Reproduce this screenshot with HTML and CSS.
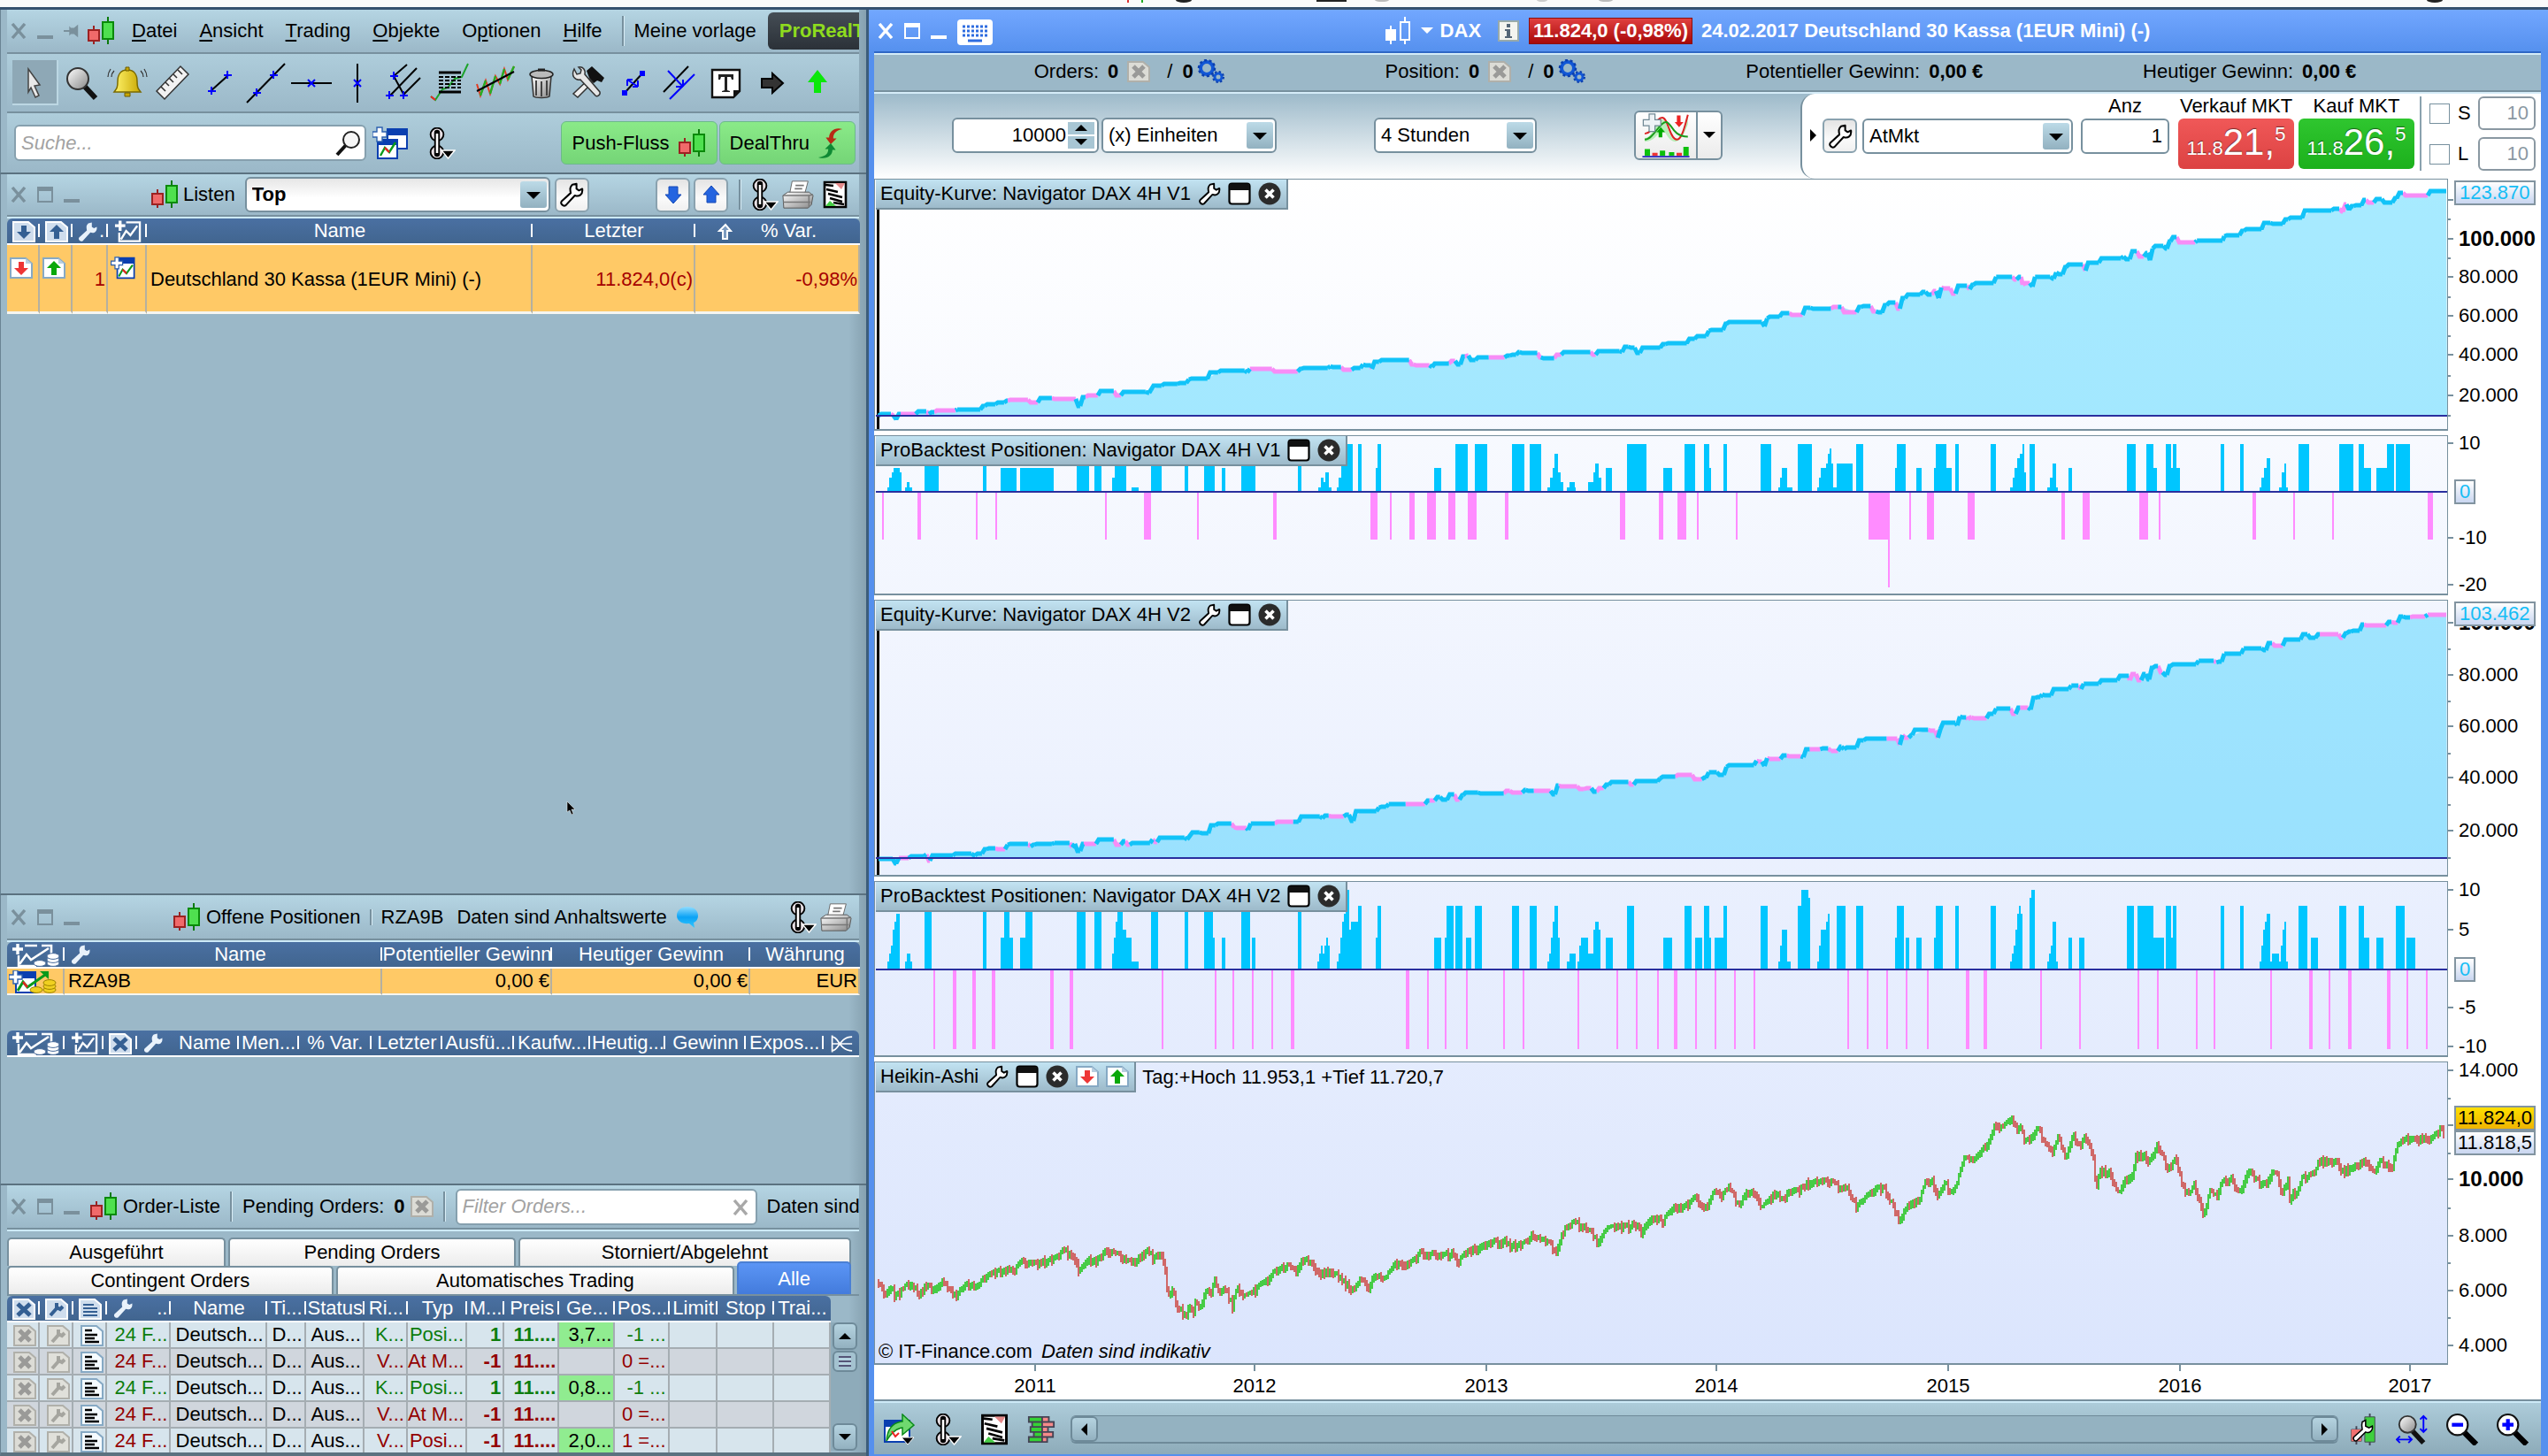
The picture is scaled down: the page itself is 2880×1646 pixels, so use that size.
FILE: index.html
```html
<!DOCTYPE html>
<html lang="de">
<head>
    <meta charset="UTF-8">
    <meta name="viewport" content="width=device-width, initial-scale=1.0">
    <title>ProRealTime - DAX</title>
    <link rel="stylesheet" href="styles.css">
</head>
<body>
    <!-- Icons -->
    <svg class="sprite" aria-hidden="true">
        <defs>
            <linearGradient id="steel" x1="0" y1="0" x2="1" y2="1"><stop offset="0" stop-color="#fff"/><stop offset="1" stop-color="#888"/></linearGradient>
            <linearGradient id="gold" x1="0" y1="0" x2="1" y2="0"><stop offset="0" stop-color="#fff36b"/><stop offset="1" stop-color="#c9a800"/></linearGradient>
            <linearGradient id="page" x1="0" y1="0" x2="0" y2="1"><stop offset="0" stop-color="#0a3fb0"/><stop offset=".3" stop-color="#0a3fb0"/><stop offset=".3" stop-color="#fff"/></linearGradient>
            <linearGradient id="cyan" x1="0" y1="0" x2="0" y2="1"><stop offset="0" stop-color="#8fdcff"/><stop offset=".5" stop-color="#0aa2f5"/><stop offset="1" stop-color="#35c8ff"/></linearGradient>
        </defs>
        <symbol id="i-x" viewBox="0 0 18 18"><path d="M2 1l14 16M16 1L2 17" stroke="currentColor" stroke-width="3.4" fill="none"/></symbol>
        <symbol id="i-max" viewBox="0 0 18 18"><path d="M1 1h16v16H1z" stroke="currentColor" stroke-width="2" fill="none"/><path d="M1 0h16v5H1z" fill="currentColor"/></symbol>
        <symbol id="i-min" viewBox="0 0 18 18"><path d="M0 14h18v4H0z" fill="currentColor"/></symbol>
        <symbol id="i-pin" viewBox="0 0 20 18"><path d="M0 8h7V3l2 2h4l5-4v16l-5-4H9l-2 2v-5H0z" fill="currentColor"/></symbol>
        <symbol id="i-candle" viewBox="0 0 32 32"><path d="M8 10v21" stroke="#9c2222" stroke-width="2"/><path d="M24 0v31" stroke="#0a7a0a" stroke-width="2"/><path d="M2 15h12v12H2z" fill="#f06a6a" stroke="#9c2222" stroke-width="2"/><path d="M18 6h12v19H18z" fill="#4fe04f" stroke="#0a8a0a" stroke-width="2"/></symbol>
        <symbol id="i-candle-w" viewBox="0 0 32 32"><path d="M8 10v21M24 0v6M24 26v5" stroke="#fff" stroke-width="2"/><path d="M2 14h12v13H2z" fill="#fff"/><path d="M19 6h10v20H19z" fill="none" stroke="#fff" stroke-width="2"/></symbol>
        <symbol id="i-cursor" viewBox="0 0 46 46"><path d="M16 8l13 18-6 1 5 11-4 2-5-11-3 5z" fill="#e8e8e8" stroke="#444" stroke-width="1.5"/></symbol>
        <symbol id="i-lens" viewBox="0 0 46 46"><path d="M26 26l13 14" stroke="#111" stroke-width="6"/><circle cx="19" cy="18" r="12" fill="url(#steel)" stroke="#333" stroke-width="2"/></symbol>
        <symbol id="i-bell" viewBox="0 0 46 46"><path d="M23 8c8 0 11 6 11 13 0 7 1 8 4 12H8c3-4 4-5 4-12 0-7 3-13 11-13z" fill="url(#gold)" stroke="#7a6a00" stroke-width="1.5"/><path d="M20 34h6v4h-6zM21 5h4v4h-4z" fill="#c9a800" stroke="#6a5a00"/><path d="M8 9c-2 2-3 4-3 7M4 7c-2 3-3 5-3 9M38 9c2 2 3 4 3 7M42 7c2 3 3 5 3 9" fill="none" stroke="#333" stroke-width="1.2"/></symbol>
        <symbol id="i-ruler" viewBox="0 0 46 46"><path d="M4 32L31 4l9 9-27 28z" fill="#f2f2f2" stroke="#333" stroke-width="1.5"/><path d="M9 27l5 5M14 22l4 4M18 17l5 5M23 13l4 4M28 8l5 5" stroke="#333" stroke-width="1.6"/></symbol>
        <symbol id="i-segment" viewBox="0 0 46 46"><path d="M13 32L33 14" stroke="#000" stroke-width="2"/><path d="M10 32h9M14 27v9M28 14h9M32 9v9" stroke="#00f" stroke-width="2"/></symbol>
        <symbol id="i-line" viewBox="0 0 46 46"><path d="M2 45L45 1" stroke="#000" stroke-width="2"/><path d="M9 34h9M13 29v9M28 14h9M32 9v9" stroke="#00f" stroke-width="2"/></symbol>
        <symbol id="i-hline" viewBox="0 0 46 46"><path d="M0 23h46" stroke="#000" stroke-width="2"/><path d="M19 19l8 8M27 19l-8 8" stroke="#00f" stroke-width="2"/></symbol>
        <symbol id="i-vline" viewBox="0 0 46 46"><path d="M23 1v44" stroke="#000" stroke-width="2"/><path d="M19 19l8 8M27 19l-8 8" stroke="#00f" stroke-width="2"/></symbol>
        <symbol id="i-fork" viewBox="0 0 46 46"><path d="M12 15L27 2M8 37L38 6M22 37l20-20M12 15l12 22" stroke="#000" stroke-width="2"/><path d="M8 15h9M12 10v9M3 37h9M7 32v9M19 37h9M23 32v9" stroke="#00f" stroke-width="2"/></symbol>
        <symbol id="i-fibo" viewBox="0 0 46 46"><path d="M2 38l5 4 8-12 6-2 8-10 8-2L44 1" fill="none" stroke="#1ca32b" stroke-width="2"/><path d="M2 38l5 4" stroke="#e22" stroke-width="2"/><path d="M11 11h25M11 33h25" stroke="#000" stroke-width="3"/><path d="M11 16h25M11 20h25M11 24h25M11 28h25" stroke="#000" stroke-width="2" stroke-dasharray="5 2"/></symbol>
        <symbol id="i-zigzag" viewBox="0 0 46 46"><path d="M2 24l4 13 6-17 5 15 6-20 5 9 5-17 4 12 7-15" fill="none" stroke="#e23b22" stroke-width="2"/><path d="M6 37l6-17M17 35l6-20M28 24l5-17M37 19l7-15" stroke="#23b023" stroke-width="2.4"/><path d="M2 32L44 10" stroke="#000" stroke-width="2"/></symbol>
        <symbol id="i-bin" viewBox="0 0 46 46"><path d="M12 15h22l-2 23c-3 2-15 2-18 0z" fill="url(#steel)" stroke="#333" stroke-width="1.5"/><ellipse cx="23" cy="13" rx="13" ry="4.5" fill="#bbb" stroke="#222" stroke-width="1.5"/><path d="M19 8h8" stroke="#222" stroke-width="3"/><path d="M17 20v17M23 21v17M29 20v17" stroke="#444" stroke-width="2"/></symbol>
        <symbol id="i-tools" viewBox="0 0 46 46"><path d="M22 9l6-5 14 13-3 5-5-2-4 3-5-6z" fill="#111"/><path d="M25 18l4 4-17 17-5-4z" fill="#eee" stroke="#333" stroke-width="1.5"/><path d="M8 7l3 6 4-1 1-4-3-3c5-1 8 3 7 8l17 20c1 3-3 6-5 4L15 19C9 20 4 15 8 7z" fill="#e6e6e6" stroke="#333" stroke-width="1.5"/></symbol>
        <symbol id="i-copyline" viewBox="0 0 46 46"><path d="M13 34L33 12" stroke="#000" stroke-width="2"/><path d="M10 31h6v6h-6zM30 9h6v6h-6z" fill="#00f"/><path d="M16 19l12 8M16 19v7M16 19h6M28 27v-7M28 27h-6" stroke="#00f" stroke-width="2" fill="none"/></symbol>
        <symbol id="i-channel" viewBox="0 0 46 46"><path d="M5 33L33 4" stroke="#000" stroke-width="2"/><path d="M12 41L40 13" stroke="#00f" stroke-width="2"/><path d="M10 9l17 18M27 27v-8M27 27h-8" stroke="#00f" stroke-width="2" fill="none"/></symbol>
        <symbol id="i-text" viewBox="0 0 46 46"><path d="M8 8h31v24l-7 7H8z" fill="#fff" stroke="#111" stroke-width="2.4"/><path d="M39 31h-7v8z" fill="#111"/><path d="M15 13h17v6h-2l-1-3h-4v15l3 1v1h-9v-1l3-1V16h-4l-1 3h-2z" fill="#222"/></symbol>
        <symbol id="i-right" viewBox="0 0 46 46"><path d="M12 18h12v-6l12 11-12 11v-6H12z" fill="#333" stroke="#000" stroke-width="2"/></symbol>
        <symbol id="i-up" viewBox="0 0 46 46"><path d="M23 8l11 14h-7v12h-8V22h-7z" fill="#0be80b"/></symbol>
        <symbol id="i-search" viewBox="0 0 30 30"><path d="M12 17L2 28" stroke="#111" stroke-width="4"/><circle cx="18" cy="11" r="9" fill="#f6f6f6" stroke="#222" stroke-width="2"/></symbol>
        <symbol id="i-charts" viewBox="0 0 40 36"><path d="M17 2h22v22H17z" fill="url(#page)" stroke="#0a3fb0" stroke-width="2"/><path d="M6 14h22v21H6z" fill="url(#page)" stroke="#0a3fb0" stroke-width="2"/><path d="M9 32l5-9 5 5 7-11" fill="none" stroke="#0a9a1a" stroke-width="2.4"/><path d="M14 23l5 5" stroke="#e22" stroke-width="2.4"/><path d="M5 0h6v5h5v6h-5v5H5v-5H0V5h5z" fill="#fff" stroke="#2b5fae" stroke-width="1.4"/></symbol>
        <symbol id="i-chart" viewBox="0 0 32 30"><path d="M8 2h22v26H8z" fill="url(#page)" stroke="#0a3fb0" stroke-width="2"/><path d="M10 26l5-9 5 5 8-11" fill="none" stroke="#0a9a1a" stroke-width="2.4"/><path d="M15 17l5 5" stroke="#e22" stroke-width="2.4"/><path d="M5 1h5v5h5v5h-5v5H5v-5H0V6h5z" fill="#fff" stroke="#2b5fae" stroke-width="1.4"/></symbol>
        <symbol id="i-chart-w" viewBox="0 0 32 26"><path d="M14 2h16v22H6V14" fill="none" stroke="#fff" stroke-width="2.4"/><path d="M8 22l6-10 5 5 8-11" fill="none" stroke="#fff" stroke-width="2.4"/><path d="M7 0v12M1 6h12" stroke="#fff" stroke-width="3.4"/></symbol>
        <symbol id="i-chain" viewBox="0 0 32 36"><g fill="none" stroke="#000" stroke-width="7.4"><circle cx="11" cy="8" r="4.6"/><circle cx="11" cy="28" r="4.6"/></g><g fill="none" stroke="#e8e0e4" stroke-width="3.6"><circle cx="11" cy="8" r="4.6"/><circle cx="11" cy="28" r="4.6"/></g><path d="M11 6v24" stroke="#000" stroke-width="6.4" stroke-linecap="round"/><path d="M11 7v22" stroke="#fff" stroke-width="2.6"/><path d="M16 26h15l-7.500 9z" fill="#000" stroke="#fff" stroke-width="1.4"/></symbol>
        <symbol id="i-swap" viewBox="0 0 32 38"><path d="M30 2c-9-3-16 3-16 10h-4l6 8 7-7h-4c0-6 4-10 11-11z" fill="#b82a14"/><path d="M1 36c10 3 17-2 17-9h4l-6-8-7 7h4c0 6-4 9-12 10z" fill="#0f8a34"/></symbol>
        <symbol id="i-wrench" viewBox="0 0 30 30"><path d="M16 3l5-1v6l3 2 4-2c1 7-4 10-9 8L8 28c-3 2-7-2-5-5l11-10c-1-5-1-7 2-10z" fill="#fff" stroke="#000" stroke-width="2.2" stroke-linejoin="round"/></symbol>
        <symbol id="i-wrench-w" viewBox="0 0 30 30"><path d="M16 3l5-1v6l3 2 4-2c1 7-4 10-9 8L8 28c-3 2-7-2-5-5l11-10c-1-5-1-7 2-10z" fill="#e9f2fb"/></symbol>
        <symbol id="i-dn" viewBox="0 0 28 28"><path d="M9 5h10v9h4l-9 10-9-10h4z" fill="#2464e0" stroke="#1449b5"/></symbol>
        <symbol id="i-upb" viewBox="0 0 28 28"><path d="M9 23h10v-9h4L14 4 5 14h4z" fill="#2464e0" stroke="#1449b5"/></symbol>
        <symbol id="i-upo" viewBox="0 0 20 24"><path d="M7 20h5v-9h4l-6-7-7 7h4z" fill="#7d9cc0" stroke="#fff" stroke-width="2"/></symbol>
        <symbol id="i-print" viewBox="0 0 38 34"><path d="M12 1h19l-4 15H9z" fill="#fff" stroke="#666"/><path d="M16 6h10M15 10h9" stroke="#777" stroke-width="1.800"/><path d="M1 18l6-4h25l5 4-2 11-4 4H2z" fill="url(#steel)" stroke="#555"/><path d="M1 18h31l5-1M1 26h33M32 18v14" stroke="#777" stroke-width="1.5" fill="none"/></symbol>
        <symbol id="i-journal" viewBox="0 0 28 32"><path d="M2 2h24v28H2z" fill="#fff" stroke="#000" stroke-width="2.6"/><path d="M3 5l9 1M4 10l13 3M6 15l16 4M8 20l14 4M12 25l12 2" stroke="#000" stroke-width="2.400"/><path d="M14 3h11l-4 7z" fill="#e48a8a"/><path d="M3 29l5-6 7 6z" fill="#45cc45"/></symbol>
        <symbol id="i-page-dn" viewBox="0 0 26 24"><path d="M1 1h17l7 6v16H1z" fill="#fff" stroke="#86a9c4" stroke-width="2"/><path d="M18 1v6h7z" fill="#b9cfe0"/><path d="M10 5h6v7h5l-8 8-8-8h5z" fill="#ee3535"/></symbol>
        <symbol id="i-page-up" viewBox="0 0 26 24"><path d="M1 1h17l7 6v16H1z" fill="#fff" stroke="#86a9c4" stroke-width="2"/><path d="M18 1v6h7z" fill="#b9cfe0"/><path d="M10 20h6v-8h5l-8-8-8 8h5z" fill="#09a809"/></symbol>
        <symbol id="i-hpage-dn" viewBox="0 0 26 24"><path d="M1 1h17l7 6v16H1z" fill="#cfdded" stroke="#fff" stroke-width="2"/><path d="M10 5h6v7h5l-8 8-8-8h5z" fill="#345f93"/></symbol>
        <symbol id="i-hpage-up" viewBox="0 0 26 24"><path d="M1 1h17l7 6v16H1z" fill="#cfdded" stroke="#fff" stroke-width="2"/><path d="M10 20h6v-8h5l-8-8-8 8h5z" fill="#345f93"/></symbol>
        <symbol id="i-hpage-x" viewBox="0 0 26 24"><path d="M1 1h17l7 6v16H1z" fill="#cfdded" stroke="#fff" stroke-width="2"/><path d="M6 6l14 13M20 6L6 19" stroke="#345f93" stroke-width="5"/></symbol>
        <symbol id="i-hpage-w" viewBox="0 0 26 24"><path d="M1 1h17l7 6v16H1z" fill="#cfdded" stroke="#fff" stroke-width="2"/><path d="M6 19l8-9M13 5v5l4 2 3-3" stroke="#345f93" stroke-width="4" fill="none"/></symbol>
        <symbol id="i-hpage-l" viewBox="0 0 26 24"><path d="M1 1h17l7 6v16H1z" fill="#cfdded" stroke="#fff" stroke-width="2"/><path d="M5 7h12M5 11h16M5 15h16M5 19h16" stroke="#345f93" stroke-width="2"/></symbol>
        <symbol id="i-gpage-x" viewBox="0 0 26 24"><path d="M1 1h17l7 6v16H1z" fill="#dcdcd6" stroke="#b0b0aa" stroke-width="2"/><path d="M7 6l12 12M19 6L7 18" stroke="#9a9a98" stroke-width="5"/></symbol>
        <symbol id="i-gpage-w" viewBox="0 0 26 24"><path d="M1 1h17l7 6v16H1z" fill="#e0e0da" stroke="#b0b0aa" stroke-width="2"/><path d="M6 19l8-9M13 5v5l4 2 3-3" stroke="#a5a59f" stroke-width="4" fill="none"/></symbol>
        <symbol id="i-page-l" viewBox="0 0 26 24"><path d="M1 1h17l7 6v16H1z" fill="#f5fbff" stroke="#86a9c4" stroke-width="2"/><path d="M5 6h8M5 11h14M5 15h11M5 19h16" stroke="#000" stroke-width="2.4"/></symbol>
        <symbol id="i-coins" viewBox="0 0 54 26"><path d="M8 2h22v23H8z" fill="url(#page)" stroke="#0a3fb0" stroke-width="2"/><path d="M10 23l6-10 5 6 20-14" fill="none" stroke="#0a9a1a" stroke-width="3"/><path d="M35 1h10v9z" fill="#0a9a1a"/><path d="M16 13l5 6" stroke="#e22" stroke-width="2.4"/><path d="M5 0h5v5h5v5h-5v5H5v-5H0V5h5z" fill="#fff" stroke="#2b5fae" stroke-width="1.4"/><g fill="#f0d020" stroke="#9c8200"><ellipse cx="31" cy="22" rx="7" ry="3.4"/><ellipse cx="46" cy="22" rx="7" ry="3.4"/><ellipse cx="46" cy="18" rx="7" ry="3.4"/><ellipse cx="46" cy="14" rx="7" ry="3.4"/></g></symbol>
        <symbol id="i-coins-w" viewBox="0 0 54 26"><path d="M14 2h14M7 13v12h20" fill="none" stroke="#fff" stroke-width="2.4"/><path d="M8 23l8-11 5 6 20-13M33 2h11v9" fill="none" stroke="#fff" stroke-width="2.6"/><path d="M6 0v12M0 6h12" stroke="#fff" stroke-width="3.4"/><g fill="#fff" stroke="#46699a"><ellipse cx="31" cy="22" rx="7" ry="3.4"/><ellipse cx="46" cy="22" rx="7" ry="3.4"/><ellipse cx="46" cy="18" rx="7" ry="3.4"/><ellipse cx="46" cy="14" rx="7" ry="3.4"/></g></symbol>
        <symbol id="i-merge" viewBox="0 0 30 22"><path d="M3 0v22M3 2c9 0 9 18 26 18M3 20C12 20 12 2 29 2M3 11h26" fill="none" stroke="#fff" stroke-width="2"/></symbol>
        <symbol id="i-bubble" viewBox="0 0 26 26"><path d="M13 1c7 0 12 4 12 10 0 4-2 7-5 8l1 6-6-5C7 21 1 17 1 11 1 5 6 1 13 1z" fill="url(#cyan)"/></symbol>
        <symbol id="i-gears" viewBox="0 0 32 28"><circle cx="11" cy="10" r="7" fill="none" stroke="#1257d6" stroke-width="4"/><circle cx="11" cy="10" r="9" fill="none" stroke="#0b3fae" stroke-width="2.5" stroke-dasharray="3 2.6"/><circle cx="24" cy="20" r="4" fill="none" stroke="#1257d6" stroke-width="3"/><circle cx="24" cy="20" r="6" fill="none" stroke="#0b3fae" stroke-width="2" stroke-dasharray="2.4 2.3"/></symbol>
        <symbol id="i-keys" viewBox="0 0 40 30"><rect width="40" height="29" rx="4" fill="#fff"/><path d="M6 8h28M6 13h28M6 18h28" stroke="#2e6ce0" stroke-width="3" stroke-dasharray="3 2"/><path d="M12 24h16" stroke="#2e6ce0" stroke-width="3"/></symbol>
        <symbol id="i-info" viewBox="0 0 24 24"><path d="M1 1h22v22H1z" fill="#f4f4f0" stroke="#9aa" stroke-width="2"/><path d="M10 4h4v4h-4zM8 10h6v8h2v2H8v-2h2v-6H8z" fill="#567"/></symbol>
        <symbol id="i-indicator" viewBox="0 0 62 46"><path d="M2 34C14 34 16 8 24 8c10 0 10 28 20 28 9 0 12-20 17-33v12c-4 10-8 22-17 24-8 0-12-10-18-18-6 8-12 18-24 18z" fill="#b9eeb9"/><path d="M2 28c12 0 14-22 24-22 8 0 10 30 20 30 6 0 10-14 15-34" fill="none" stroke="#d22" stroke-width="2.4"/><path d="M2 36c12 0 20-24 29-24 8 0 8 20 30 20" fill="none" stroke="#1a9c1a" stroke-width="2.4"/><path d="M8 1h8v8h8v8h-8v8H8v-8H0V9h8z" fill="#eef3f6" stroke="#708894" stroke-width="1.5"/><path d="M46 3h5v9h4l-6 7-6-7h3z" fill="#e22"/><path d="M21 33h5v-7h4l-6-7-6 7h3z" fill="#0a0"/></symbol>
        <symbol id="i-hist" viewBox="0 0 62 14"><path d="M3 3h7v9H3zM23 5h7v7h-7zM35 7h7v5h-7zM54 0h7v12h-7z" fill="#0cc00c"/><path d="M13 8h7v4h-7zM45 8h7v4h-7z" fill="#e33"/><path d="M0 13h62" stroke="#22b" stroke-width="2"/></symbol>
        <symbol id="i-win" viewBox="0 0 26 26"><rect x="1.5" y="1.5" width="23" height="23" rx="3" fill="#fff" stroke="#000" stroke-width="2.2"/><path d="M2 2h22v7H2z" fill="#111"/></symbol>
        <symbol id="i-xc" viewBox="0 0 26 26"><circle cx="13" cy="13" r="12.5" fill="#2b2b2b"/><path d="M8.500 8.500l9 9M17.500 8.500l-9 9" stroke="#fff" stroke-width="3.600"/></symbol>
        <symbol id="i-share" viewBox="0 0 36 36"><path d="M2 8h28v24H2z" fill="url(#page)" stroke="#0a3fb0" stroke-width="2"/><path d="M4 31C5 17 12 10 22 9V1l13 12-13 11v-8c-8 1-13 6-18 15z" fill="#6fd86f" stroke="#0a8a1a" stroke-width="1.5"/><path d="M10 20l4 6 4-4" stroke="#e22" stroke-width="2" fill="none"/><path d="M21 27h14l-7 8z" fill="#000" stroke="#fff"/></symbol>
        <symbol id="i-depth" viewBox="0 0 34 32"><g stroke="#445" stroke-width="2"><path d="M2 1h16v6H2zM6 7h12v6H6zM4 13h14v6H4zM8 19h10v6H8zM2 25h16v6H2z" fill="#34d334"/><path d="M18 1h8v6h-8zM18 7h14v6H18zM18 13h7v6h-7zM18 19h13v6H18zM18 25h6v6h-6z" fill="#f58a8a"/></g></symbol>
        <symbol id="i-wcandle" viewBox="0 0 32 38"><path d="M8 15v22M24 0v38" stroke="#445" stroke-width="2"/><path d="M2 19h12v14H2zM18 4h12v30H18z" fill="#3ecf3e" stroke="#445"/><path d="M2 19h12v14H2z" fill="#f07070"/><path d="M15 10l4-2v7l4 2 4-2c1 6-4 9-8 7L9 32c-2 2-6-1-4-4l10-9c-1-4-1-6 0-9z" fill="#fff" stroke="#000" stroke-width="1.6"/></symbol>
        <symbol id="i-fit" viewBox="0 0 38 34"><path d="M20 19l13 14" stroke="#111" stroke-width="6"/><circle cx="14" cy="11" r="10" fill="url(#steel)" stroke="#333" stroke-width="2"/><path d="M33 1v18M29 5l4-4 4 4M29 16l4 4 4-4M1 29h18M5 25l-4 4 4 4M15 25l4 4-4 4" stroke="#00f" stroke-width="2" fill="none"/></symbol>
        <symbol id="i-zout" viewBox="0 0 34 34"><path d="M18 19l14 14" stroke="#000" stroke-width="6"/><circle cx="12" cy="12" r="11" fill="#fff" stroke="#111" stroke-width="2"/><path d="M6 12h12" stroke="#00f" stroke-width="4"/></symbol>
        <symbol id="i-zin" viewBox="0 0 34 34"><path d="M18 19l14 14" stroke="#000" stroke-width="6"/><circle cx="12" cy="12" r="11" fill="#fff" stroke="#111" stroke-width="2"/><path d="M6 12h12M12 6v12" stroke="#00f" stroke-width="4"/></symbol>
    </svg>

    <div class="strip">
        <svg class="strip-marks" viewBox="0 0 2880 8" preserveAspectRatio="none" aria-hidden="true">
            <path d="M1274 0h2v3h-2z" fill="#d33"/><path d="M1290 0h2v3h-2z" fill="#2a2"/><ellipse cx="1338" cy="0" rx="9" ry="3" fill="#222"/><path d="M1488 0h34v2h-34z" fill="#222"/><ellipse cx="1562" cy="0" rx="8" ry="2" fill="#bbb"/><ellipse cx="1743" cy="0" rx="6" ry="2" fill="#ccc"/><ellipse cx="1815" cy="0" rx="8" ry="2" fill="#bbb"/><ellipse cx="2752" cy="0" rx="9" ry="3" fill="#222"/>
        </svg>
    </div>

    <div class="desk">
        <div class="left">
            <!-- Hauptfenster -->
            <section class="win">
                <div class="bar menubar">
                    <div class="ctl">
                        <button aria-label="Schließen"><svg><use href="#i-x"/></svg></button>
                        <button aria-label="Minimieren"><svg><use href="#i-min"/></svg></button>
                        <button aria-label="Anheften"><svg><use href="#i-pin"/></svg></button>
                    </div>
                    <svg class="candle"><use href="#i-candle"/></svg>
                    <nav class="menu">
                        <a href="#"><u>D</u>atei</a>
                        <a href="#"><u>A</u>nsicht</a>
                        <a href="#"><u>T</u>rading</a>
                        <a href="#"><u>O</u>bjekte</a>
                        <a href="#">O<u>p</u>tionen</a>
                        <a href="#"><u>H</u>ilfe</a>
                    </nav>
                    <span class="sep"></span>
                    <a class="template" href="#">Meine vorlage</a>
                    <button class="brand">ProRealT</button>
                </div>
                <div class="bar tools">
                    <button class="active" aria-label="Zeiger"><svg><use href="#i-cursor"/></svg></button>
                    <button aria-label="Lupe"><svg><use href="#i-lens"/></svg></button>
                    <button aria-label="Alarm"><svg><use href="#i-bell"/></svg></button>
                    <button aria-label="Lineal"><svg><use href="#i-ruler"/></svg></button>
                    <button aria-label="Segment"><svg><use href="#i-segment"/></svg></button>
                    <button aria-label="Linie"><svg><use href="#i-line"/></svg></button>
                    <button aria-label="Horizontale"><svg><use href="#i-hline"/></svg></button>
                    <button aria-label="Vertikale"><svg><use href="#i-vline"/></svg></button>
                    <button aria-label="Pitchfork"><svg><use href="#i-fork"/></svg></button>
                    <button aria-label="Fibonacci"><svg><use href="#i-fibo"/></svg></button>
                    <button aria-label="Regression"><svg><use href="#i-zigzag"/></svg></button>
                    <button aria-label="Löschen"><svg><use href="#i-bin"/></svg></button>
                    <button aria-label="Werkzeuge"><svg><use href="#i-tools"/></svg></button>
                    <button aria-label="Kopieren"><svg><use href="#i-copyline"/></svg></button>
                    <button aria-label="Parallele"><svg><use href="#i-channel"/></svg></button>
                    <button aria-label="Text"><svg><use href="#i-text"/></svg></button>
                    <button aria-label="Pfeil rechts"><svg><use href="#i-right"/></svg></button>
                    <button aria-label="Pfeil hoch"><svg><use href="#i-up"/></svg></button>
                </div>
                <div class="searchbar">
                    <div class="search">
                        <input type="text" placeholder="Suche..." aria-label="Suche">
                        <svg><use href="#i-search"/></svg>
                    </div>
                    <button class="plain" aria-label="Neuer Chart"><svg class="w40"><use href="#i-charts"/></svg></button>
                    <button class="plain link" aria-label="Verknüpfen"><svg class="w32"><use href="#i-chain"/></svg></button>
                    <div class="flow">
                        <button>Push-Fluss <svg class="candle"><use href="#i-candle"/></svg></button>
                        <button>DealThru <svg class="swap"><use href="#i-swap"/></svg></button>
                    </div>
                </div>
            </section>

            <!-- Listen -->
            <section class="win lists">
                <div class="bar titlebar">
                    <div class="ctl">
                        <button aria-label="Schließen"><svg><use href="#i-x"/></svg></button>
                        <button aria-label="Maximieren"><svg><use href="#i-max"/></svg></button>
                        <button aria-label="Minimieren"><svg><use href="#i-min"/></svg></button>
                    </div>
                    <div class="lists-head">
                        <svg class="candle"><use href="#i-candle"/></svg>
                        <label for="list">Listen</label>
                        <div class="select list-select"><select id="list"><option>Top</option></select><span class="arrow"></span></div>
                        <button class="key" aria-label="Einstellungen"><svg><use href="#i-wrench"/></svg></button>
                    </div>
                    <div class="right-tools">
                        <button class="key" aria-label="Nach unten"><svg><use href="#i-dn"/></svg></button>
                        <button class="key" aria-label="Nach oben"><svg><use href="#i-upb"/></svg></button>
                        <span class="sep"></span>
                        <button class="plain" aria-label="Verknüpfen"><svg class="w32"><use href="#i-chain"/></svg></button>
                        <button class="plain" aria-label="Drucken"><svg class="w38"><use href="#i-print"/></svg></button>
                        <button class="plain" aria-label="Journal"><svg class="journal"><use href="#i-journal"/></svg></button>
                    </div>
                </div>
                <table class="grid list-table">
                    <colgroup><col class="c37"><col class="c37"><col class="c40"><col class="c44"><col class="c436"><col class="c184"><col class="c186"></colgroup>
                    <thead>
                        <tr>
                            <th><svg class="pg"><use href="#i-hpage-dn"/></svg></th>
                            <th><svg class="pg"><use href="#i-hpage-up"/></svg></th>
                            <th><svg class="pg"><use href="#i-wrench-w"/></svg>.</th>
                            <th><svg class="pg wide"><use href="#i-chart-w"/></svg></th>
                            <th>Name</th>
                            <th>Letzter</th>
                            <th class="var"><svg class="pg"><use href="#i-upo"/></svg><span>% Var.</span></th>
                        </tr>
                    </thead>
                    <tbody>
                        <tr>
                            <td class="ic"><svg class="pg"><use href="#i-page-dn"/></svg></td>
                            <td class="ic"><svg class="pg"><use href="#i-page-up"/></svg></td>
                            <td class="num neg">1</td>
                            <td class="ic"><svg class="pg wide"><use href="#i-chart"/></svg></td>
                            <td>Deutschland 30 Kassa (1EUR Mini) (-)</td>
                            <td class="num neg">11.824,0(c)</td>
                            <td class="num neg">-0,98%</td>
                        </tr>
                    </tbody>
                </table>
                <svg class="mouse" viewBox="0 0 12 16" aria-hidden="true"><path d="M1 1l9 9H6l2 5-2 1-2-5-3 2z" fill="#000" stroke="#fff" stroke-width=".5"/></svg>
            </section>

            <!-- Offene Positionen -->
            <section class="win positions">
                <div class="bar titlebar">
                    <div class="ctl">
                        <button aria-label="Schließen"><svg><use href="#i-x"/></svg></button>
                        <button aria-label="Maximieren"><svg><use href="#i-max"/></svg></button>
                        <button aria-label="Minimieren"><svg><use href="#i-min"/></svg></button>
                    </div>
                    <div class="pos-head">
                        <svg class="candle"><use href="#i-candle"/></svg>
                        <span>Offene Positionen</span>
                        <span class="sep short"></span>
                        <span>RZA9B</span>
                        <span class="hint">Daten sind Anhaltswerte</span>
                        <svg class="bubble"><use href="#i-bubble"/></svg>
                    </div>
                    <div class="right-tools">
                        <button class="plain" aria-label="Verknüpfen"><svg class="w32"><use href="#i-chain"/></svg></button>
                        <button class="plain" aria-label="Drucken"><svg class="w38"><use href="#i-print"/></svg></button>
                    </div>
                </div>
                <table class="grid pos-table">
                    <colgroup><col class="c65"><col class="c359"><col class="c192"><col class="c224"><col class="c124"></colgroup>
                    <thead>
                        <tr>
                            <th><svg class="coins"><use href="#i-coins-w"/></svg></th>
                            <th class="with-ic"><svg class="pg"><use href="#i-wrench-w"/></svg><span>Name</span></th>
                            <th>Potentieller Gewinn</th>
                            <th>Heutiger Gewinn</th>
                            <th>Währung</th>
                        </tr>
                    </thead>
                    <tbody>
                        <tr>
                            <td><svg class="coins"><use href="#i-coins"/></svg></td>
                            <td>RZA9B</td>
                            <td class="num">0,00 €</td>
                            <td class="num">0,00 €</td>
                            <td class="num">EUR</td>
                        </tr>
                    </tbody>
                </table>
                <table class="grid detail-table">
                    <colgroup><col class="c65"><col class="c44"><col class="c38"><col class="c114"><col class="c68"><col class="c82"><col class="c80"><col class="c81"><col class="c86"><col class="c85"><col class="c90"><col class="c88"><col class="c40"></colgroup>
                    <thead>
                        <tr>
                            <th><svg class="coins"><use href="#i-coins-w"/></svg></th>
                            <th><svg class="pg wide"><use href="#i-chart-w"/></svg></th>
                            <th><svg class="pg"><use href="#i-hpage-x"/></svg></th>
                            <th class="with-ic"><svg class="pg"><use href="#i-wrench-w"/></svg><span>Name</span></th>
                            <th>Men...</th>
                            <th>% Var.</th>
                            <th>Letzter</th>
                            <th>Ausfü...</th>
                            <th>Kaufw...</th>
                            <th>Heutig...</th>
                            <th>Gewinn</th>
                            <th>Expos...</th>
                            <th><svg class="pg"><use href="#i-merge"/></svg></th>
                        </tr>
                    </thead>
                </table>
            </section>

            <!-- Order-Liste -->
            <section class="win orders">
                <div class="bar titlebar">
                    <div class="ctl">
                        <button aria-label="Schließen"><svg><use href="#i-x"/></svg></button>
                        <button aria-label="Maximieren"><svg><use href="#i-max"/></svg></button>
                        <button aria-label="Minimieren"><svg><use href="#i-min"/></svg></button>
                    </div>
                    <div class="order-head">
                        <svg class="candle"><use href="#i-candle"/></svg>
                        <span>Order-Liste</span>
                        <span class="sep"></span>
                        <span>Pending Orders:</span>
                        <b>0</b>
                        <svg class="pg"><use href="#i-gpage-x"/></svg>
                        <span class="sep"></span>
                        <div class="search filter">
                            <input type="text" placeholder="Filter Orders..." aria-label="Filter Orders">
                            <svg><use href="#i-x"/></svg>
                        </div>
                        <span>Daten sind</span>
                    </div>
                </div>
                <div class="tabs upper">
                    <button>Ausgeführt</button>
                    <button>Pending Orders</button>
                    <button>Storniert/Abgelehnt</button>
                </div>
                <div class="tabs lower">
                    <button>Contingent Orders</button>
                    <button>Automatisches Trading</button>
                    <button class="on">Alle</button>
                </div>
                <div class="order-body">
                    <table class="grid order-table">
                        <colgroup><col class="c37"><col class="c38"><col class="c38"><col class="c72"><col class="c108"><col class="c44"><col class="c66"><col class="c49"><col class="c67"><col class="c42"><col class="c62"><col class="c63"><col class="c61"><col class="c54"><col class="c64"><col class="c64"></colgroup>
                        <thead>
                            <tr>
                                <th><svg class="pg"><use href="#i-hpage-x"/></svg></th>
                                <th><svg class="pg"><use href="#i-hpage-w"/></svg></th>
                                <th><svg class="pg"><use href="#i-hpage-l"/></svg></th>
                                <th class="with-ic"><svg class="pg"><use href="#i-wrench-w"/></svg><span class="end">..</span></th>
                                <th>Name</th><th>Ti...</th><th>Status</th><th>Ri...</th><th>Typ</th><th>M...</th><th>Preis</th><th>Ge...</th><th>Pos...</th><th>Limit</th><th>Stop</th><th>Trai...</th>
                            </tr>
                        </thead>
                        <tbody>
                            <tr class="buy"><td><svg class="pg"><use href="#i-gpage-x"/></svg></td><td><svg class="pg"><use href="#i-gpage-w"/></svg></td><td><svg class="pg"><use href="#i-page-l"/></svg></td><td class="c">24 F...</td><td>Deutsch...</td><td>D...</td><td>Aus...</td><td class="c">K...</td><td class="c">Posi...</td><td class="c b">1</td><td class="c b">11....</td><td class="win-cell">3,7...</td><td class="c">-1 ...</td><td></td><td></td><td></td></tr>
                            <tr class="sell"><td><svg class="pg"><use href="#i-gpage-x"/></svg></td><td><svg class="pg"><use href="#i-gpage-w"/></svg></td><td><svg class="pg"><use href="#i-page-l"/></svg></td><td class="c">24 F...</td><td>Deutsch...</td><td>D...</td><td>Aus...</td><td class="c">V...</td><td class="c">At M...</td><td class="c b">-1</td><td class="c b">11....</td><td></td><td class="c">0 =...</td><td></td><td></td><td></td></tr>
                            <tr class="buy"><td><svg class="pg"><use href="#i-gpage-x"/></svg></td><td><svg class="pg"><use href="#i-gpage-w"/></svg></td><td><svg class="pg"><use href="#i-page-l"/></svg></td><td class="c">24 F...</td><td>Deutsch...</td><td>D...</td><td>Aus...</td><td class="c">K...</td><td class="c">Posi...</td><td class="c b">1</td><td class="c b">11....</td><td class="win-cell">0,8...</td><td class="c">-1 ...</td><td></td><td></td><td></td></tr>
                            <tr class="sell"><td><svg class="pg"><use href="#i-gpage-x"/></svg></td><td><svg class="pg"><use href="#i-gpage-w"/></svg></td><td><svg class="pg"><use href="#i-page-l"/></svg></td><td class="c">24 F...</td><td>Deutsch...</td><td>D...</td><td>Aus...</td><td class="c">V...</td><td class="c">At M...</td><td class="c b">-1</td><td class="c b">11....</td><td></td><td class="c">0 =...</td><td></td><td></td><td></td></tr>
                            <tr class="sell"><td><svg class="pg"><use href="#i-gpage-x"/></svg></td><td><svg class="pg"><use href="#i-gpage-w"/></svg></td><td><svg class="pg"><use href="#i-page-l"/></svg></td><td class="c">24 F...</td><td>Deutsch...</td><td>D...</td><td>Aus...</td><td class="c">V...</td><td class="c">Posi...</td><td class="c b">-1</td><td class="c b">11....</td><td class="win-cell">2,0...</td><td class="c">1 =...</td><td></td><td></td><td></td></tr>
                        </tbody>
                    </table>
                    <div class="vscroll">
                        <button aria-label="Hoch"><span class="tri up"></span></button>
                        <span class="thumb"></span>
                        <button class="last" aria-label="Runter"><span class="tri down"></span></button>
                    </div>
                </div>
            </section>
        </div>

        <!-- Chartfenster -->
        <main class="chart-win">
            <div class="chart-title">
                <div class="ctl">
                    <button aria-label="Schließen"><svg><use href="#i-x"/></svg></button>
                    <button aria-label="Maximieren"><svg><use href="#i-max"/></svg></button>
                    <button aria-label="Minimieren"><svg><use href="#i-min"/></svg></button>
                    <button class="keys" aria-label="Tastatur"><svg><use href="#i-keys"/></svg></button>
                </div>
                <div class="instrument">
                    <svg class="candle"><use href="#i-candle-w"/></svg>
                    <span class="tri down white"></span>
                    <span class="symbol">DAX</span>
                    <svg class="pg"><use href="#i-info"/></svg>
                    <span class="price">11.824,0 (-0,98%)</span>
                    <span>24.02.2017 Deutschland 30 Kassa (1EUR Mini) (-)</span>
                </div>
            </div>

            <div class="info">
                <div class="info-cell">Orders: <b>0</b><svg class="pg"><use href="#i-gpage-x"/></svg><span class="slash">/</span><b>0</b><svg class="gears"><use href="#i-gears"/></svg></div>
                <div class="info-cell">Position: <b>0</b><svg class="pg"><use href="#i-gpage-x"/></svg><span class="slash">/</span><b>0</b><svg class="gears"><use href="#i-gears"/></svg></div>
                <div class="info-cell">Potentieller Gewinn: <b>0,00 €</b></div>
                <div class="info-cell">Heutiger Gewinn: <b>0,00 €</b></div>
            </div>

            <div class="controls">
                <div class="view">
                    <div class="range">
                        <div class="spin">
                            <input type="text" value="10000" aria-label="Anzahl Einheiten">
                            <span class="spin-btns"><button aria-label="Mehr"><span class="tri up"></span></button><button aria-label="Weniger"><span class="tri down"></span></button></span>
                        </div>
                        <div class="select unit"><select aria-label="Einheit"><option>(x) Einheiten</option></select><span class="arrow"></span></div>
                    </div>
                    <div class="select frame"><select aria-label="Zeitrahmen"><option>4 Stunden</option></select><span class="arrow"></span></div>
                    <div class="indicator">
                        <button aria-label="Indikator hinzufügen"><svg class="ind"><use href="#i-indicator"/></svg><svg class="hist"><use href="#i-hist"/></svg></button>
                        <button class="more" aria-label="Mehr"><span class="tri down"></span></button>
                    </div>
                </div>
                <form class="ticket">
                    <button type="button" class="fold" aria-label="Einklappen"><span class="tri right"></span></button>
                    <button type="button" class="key lowered" aria-label="Einstellungen"><svg><use href="#i-wrench"/></svg></button>
                    <div class="select type lowered"><select aria-label="Ordertyp"><option>AtMkt</option></select><span class="arrow"></span></div>
                    <div class="field">
                        <label for="qty">Anz</label>
                        <input id="qty" type="text" value="1">
                    </div>
                    <div class="field sell-field">
                        <span>Verkauf MKT</span>
                        <button type="button" class="deal red"><span>11.8</span><span class="big">21,</span><span class="sup">5</span></button>
                    </div>
                    <div class="field">
                        <span>Kauf MKT</span>
                        <button type="button" class="deal green"><span>11.8</span><span class="big">26,</span><span class="sup">5</span></button>
                    </div>
                    <div class="stops">
                        <div class="stop"><input type="checkbox" id="stop"><label for="stop">S</label><input type="text" value="10" aria-label="Stop"></div>
                        <div class="stop"><input type="checkbox" id="limit"><label for="limit">L</label><input type="text" value="10" aria-label="Limit"></div>
                    </div>
                </form>
            </div>

            <div class="charts">
                <div class="chart eq1">
                    <div class="plot">
                        <svg id="eq1" viewBox="0 0 1777 282" preserveAspectRatio="none"></svg>
                        <div class="tag">Equity-Kurve: Navigator DAX 4H V1<svg><use href="#i-wrench"/></svg><svg><use href="#i-win"/></svg><svg><use href="#i-xc"/></svg></div>
                    </div>
                    <div class="axis" id="ax1"></div>
                </div>
                <div class="chart bt1">
                    <div class="plot">
                        <svg id="bt1" viewBox="0 0 1777 178" preserveAspectRatio="none"></svg>
                        <div class="tag">ProBacktest Positionen: Navigator DAX 4H V1<svg><use href="#i-win"/></svg><svg><use href="#i-xc"/></svg></div>
                    </div>
                    <div class="axis" id="ax2"></div>
                </div>
                <div class="chart eq2">
                    <div class="plot">
                        <svg id="eq2" viewBox="0 0 1777 310" preserveAspectRatio="none"></svg>
                        <div class="tag">Equity-Kurve: Navigator DAX 4H V2<svg><use href="#i-wrench"/></svg><svg><use href="#i-win"/></svg><svg><use href="#i-xc"/></svg></div>
                    </div>
                    <div class="axis" id="ax3"></div>
                </div>
                <div class="chart bt2">
                    <div class="plot">
                        <svg id="bt2" viewBox="0 0 1777 196" preserveAspectRatio="none"></svg>
                        <div class="tag">ProBacktest Positionen: Navigator DAX 4H V2<svg><use href="#i-win"/></svg><svg><use href="#i-xc"/></svg></div>
                    </div>
                    <div class="axis" id="ax4"></div>
                </div>
                <div class="chart px">
                    <div class="plot">
                        <svg id="px" viewBox="0 0 1777 340" preserveAspectRatio="none"></svg>
                        <div class="tag-row">
                            <div class="tag">Heikin-Ashi<svg><use href="#i-wrench"/></svg><svg><use href="#i-win"/></svg><svg><use href="#i-xc"/></svg><svg><use href="#i-page-dn"/></svg><svg><use href="#i-page-up"/></svg></div>
                            <span>Tag:+Hoch 11.953,1 +Tief 11.720,7</span>
                        </div>
                        <div class="credit">© IT-Finance.com <i>Daten sind indikativ</i></div>
                    </div>
                    <div class="axis" id="ax5"></div>
                </div>
            </div>
            <div class="years" id="years"></div>

            <div class="footer">
                <button class="plain" aria-label="Teilen"><svg class="w38"><use href="#i-share"/></svg></button>
                <button class="plain" aria-label="Verknüpfen"><svg class="w32"><use href="#i-chain"/></svg></button>
                <button class="plain" aria-label="Journal"><svg class="w32"><use href="#i-journal"/></svg></button>
                <button class="plain" aria-label="Markttiefe"><svg class="w32"><use href="#i-depth"/></svg></button>
                <div class="hscroll">
                    <button aria-label="Zurück"><span class="tri left"></span></button>
                    <button aria-label="Vor"><span class="tri right"></span></button>
                </div>
                <button class="plain" aria-label="Chart einstellen"><svg class="w32"><use href="#i-wcandle"/></svg></button>
                <button class="plain" aria-label="Anpassen"><svg class="w38"><use href="#i-fit"/></svg></button>
                <button class="plain" aria-label="Verkleinern"><svg class="w38"><use href="#i-zout"/></svg></button>
                <button class="plain" aria-label="Vergrößern"><svg class="w38"><use href="#i-zin"/></svg></button>
            </div>
        </main>
    </div>
    <script src="script.js"></script>
</body>
</html>
```
FILE: styles.css
```css
* {
    box-sizing: border-box;
}

body {
    margin: 0;
    height: 100vh;
    display: flex;
    flex-direction: column;
    overflow: hidden;
    font-family: "Liberation Sans", Arial, sans-serif;
    font-size: 22px;
    line-height: 26px;
    color: #000;
    background: #9bb8c8;
    white-space: nowrap;
}

button,
input,
select {
    font: inherit;
    color: inherit;
    margin: 0;
}

button {
    padding: 0;
    border: none;
    background: none;
    display: flex;
    align-items: center;
    justify-content: center;
    cursor: pointer;
}

a {
    color: inherit;
    text-decoration: none;
}

svg {
    display: block;
    flex: none;
}

.sprite {
    position: absolute;
    width: 0;
    height: 0;
}

/* Systemleiste oben */
.strip {
    height: 11px;
    background: #fafafa;
    border-bottom: 3px solid #35506e;
}

.strip-marks {
    width: 100%;
    height: 8px;
}

.desk {
    flex: 1;
    min-height: 0;
    display: grid;
    grid-template-columns: minmax(0, 982fr) minmax(0, 1898fr);
}

.left {
    display: flex;
    flex-direction: column;
    min-height: 0;
    border-right: 3px solid #3c5c7a;
}

.win {
    padding: 0 8px 0 7px;
    border-left: 1px solid #6a8494;
    border-bottom: 2px solid #5b7280;
    background: linear-gradient(90deg, #9bb8c8 98%, #86a1b0);
}

.bar {
    display: flex;
    align-items: center;
    border-bottom: 2px solid #77909e;
    box-shadow: 0 2px 0 #cdeaf7;
    background: linear-gradient(#b5d5e3, #9bb8c8);
}

.sep {
    flex: none;
    width: 3px;
    height: 34px;
    background: #77909e;
    border-right: 1px solid #d9edf6;
}

.sep.short {
    height: 18px;
}

/* kleine Symbole */
.candle { width: 32px; height: 32px; }
.swap { width: 30px; height: 36px; }
.pg { width: 26px; height: 24px; }
.pg.wide { width: 31px; height: 26px; }
.coins { width: 54px; height: 26px; }
.bubble { width: 26px; height: 26px; }
.journal { width: 28px; height: 32px; }
.w32 { width: 32px; height: 36px; }
.w38 { width: 36px; height: 36px; }
.w40 { width: 40px; height: 38px; }

.ctl {
    display: flex;
    gap: 12px;
    padding-left: 4px;
    color: #7a909c;
}

.ctl svg {
    width: 18px;
    height: 18px;
}

.menubar {
    height: 50px;
    overflow: hidden;
}

.menubar .candle {
    margin-left: 8px;
}

.menu {
    display: flex;
    gap: 25px;
    padding: 0 22px 0 19px;
}

.menu u {
    text-underline-offset: 3px;
}

.template {
    margin: 0 13px 0 11px;
}

.brand {
    flex: 1;
    height: 42px;
    min-width: 0;
    overflow: hidden;
    justify-content: flex-start;
    padding-left: 13px;
    border-radius: 6px 0 0 6px;
    background: linear-gradient(#454d55, #2b3138);
    color: #8edb1e;
    font-weight: bold;
}

.tools {
    height: 67px;
    padding-left: 6px;
    background: linear-gradient(#aecddb, #9bb8c8);
}

.tools button {
    width: 52px;
    height: 51px;
}

.tools svg {
    width: 46px;
    height: 46px;
}

.tools .active {
    background: #8ea8b6;
    border-right: 2px solid #bcd7e3;
    border-bottom: 2px solid #bcd7e3;
}

.searchbar {
    height: 67px;
    display: flex;
    align-items: center;
    padding-left: 8px;
    background: linear-gradient(#aecddb, #9bb8c8);
}

.search {
    position: relative;
    width: 398px;
}

.search input {
    width: 100%;
    height: 41px;
    padding: 0 6px;
    border: 2px solid #86a0ae;
    border-radius: 6px;
    background: #fff;
}

.search input::placeholder {
    font-style: italic;
    color: #a2a2a2;
    opacity: 1;
}

.search svg {
    position: absolute;
    right: 5px;
    top: 6px;
    width: 30px;
    height: 30px;
}

.link {
    margin-left: 22px;
}

.search + .plain {
    margin-left: 7px;
}

.flow {
    margin-left: auto;
    display: flex;
    gap: 2px;
    padding-right: 4px;
}

.flow button {
    height: 49px;
    gap: 9px;
    padding: 0 12px 0 11px;
    border-radius: 6px;
    border: 1px solid #6cb98b;
    background: linear-gradient(#8aea88, #75d577);
}

/* Auswahlfelder */
.select {
    position: relative;
}

.select select {
    width: 100%;
    height: 40px;
    padding: 0 40px 0 6px;
    appearance: none;
    border: 2px solid #77909e;
    border-radius: 6px;
    background: #fff;
}

.arrow {
    position: absolute;
    right: 4px;
    top: 5px;
    width: 30px;
    height: 30px;
    border-radius: 3px;
    background: linear-gradient(#bcdae7, #92b1c0);
    pointer-events: none;
}

.arrow::after {
    content: "";
    display: block;
    margin: 12px auto 0;
    width: 0;
    border: 8px solid transparent;
    border-top-color: #000;
    border-bottom: none;
}

.key {
    width: 39px;
    height: 39px;
    border: 2px solid #8aa2af;
    border-radius: 6px;
    background: linear-gradient(#e4e4e4, #fafafa 60%, #f0f0f0);
}

.key svg {
    width: 28px;
    height: 28px;
}

.right-tools {
    margin-left: auto;
    display: flex;
    align-items: center;
    gap: 4px;
    padding-right: 8px;
}

.lists .right-tools {
    padding-right: 13px;
}

.right-tools .sep {
    margin: 0 6px 0 8px;
}

.right-tools .journal {
    margin-left: 6px;
}

/* Listen */
.lists {
    position: relative;
    flex: 1;
    min-height: 0;
}

.titlebar {
    height: 48px;
}

.lists-head {
    display: flex;
    align-items: center;
    gap: 5px;
    margin-left: 80px;
}

.list-select {
    width: 345px;
    margin-left: 6px;
}

.list-select select {
    font-weight: bold;
    background: linear-gradient(#e6e6e6, #fff 60%);
}

.grid {
    width: 100%;
    table-layout: fixed;
    border-collapse: separate;
    border-spacing: 0;
    margin-top: 2px;
}

.grid th {
    height: 30px;
    padding: 0;
    font-weight: normal;
    color: #fff;
    border-bottom: 2px solid #fff;
    background: linear-gradient(#fff, #fff) right 6px / 2px 15px no-repeat, linear-gradient(#4a70a2, #41658f);
}

.grid th svg,
.grid td svg {
    display: inline-block;
    vertical-align: middle;
}

.grid th:last-child {
    border-top-right-radius: 6px;
    background: linear-gradient(#4a70a2, #41658f);
}

.grid th:first-child {
    border-top-left-radius: 6px;
}

.grid td {
    padding: 0 2px 0 4px;
    border-right: 2px solid #b5b0a0;
    background: #ffc966;
}

.grid .num {
    text-align: right;
    padding-right: 1px;
}

.neg {
    color: #a50000;
}

.list-table td {
    height: 78px;
    padding-top: 3px;
    border-bottom: 3px solid #f6f6f0;
}

.grid td.ic {
    padding: 12px 3px 0;
    vertical-align: top;
}

.grid .ic .wide {
    margin-left: -1px;
}

.grid .var svg {
    margin-right: 27px;
}

.grid .var span {
    padding-right: 28px;
}

.c37 { width: 37px; }
.c38 { width: 38px; }
.c40 { width: 40px; }
.c42 { width: 42px; }
.c44 { width: 44px; }
.c49 { width: 49px; }
.c54 { width: 54px; }
.c61 { width: 61px; }
.c62 { width: 62px; }
.c63 { width: 63px; }
.c64 { width: 64px; }
.c65 { width: 65px; }
.c66 { width: 66px; }
.c67 { width: 67px; }
.c68 { width: 68px; }
.c72 { width: 72px; }
.c80 { width: 80px; }
.c81 { width: 81px; }
.c82 { width: 82px; }
.c85 { width: 85px; }
.c86 { width: 86px; }
.c88 { width: 88px; }
.c90 { width: 90px; }
.c108 { width: 108px; }
.c114 { width: 114px; }
.c124 { width: 124px; }
.c184 { width: 184px; }
.c186 { width: 186px; }
.c192 { width: 192px; }
.c224 { width: 224px; }
.c359 { width: 359px; }
.c436 { width: 436px; }

.mouse {
    position: absolute;
    left: 65.3%;
    bottom: 11%;
    width: 12px;
    height: 16px;
}

/* Offene Positionen */
.positions {
    height: 328px;
    flex: none;
}

.positions .titlebar {
    height: 51px;
}

.pos-head {
    display: flex;
    align-items: center;
    gap: 10px;
    margin-left: 105px;
}

.pos-head .candle {
    margin-right: -4px;
}

.hint {
    margin-left: 5px;
}

.pos-table td {
    height: 30px;
    border-bottom: 2px solid #f6f6f0;
}

.pos-table td svg {
    margin-left: -2px;
}

.pos-table .with-ic span {
    padding-left: 38px;
}

.detail-table {
    margin-top: 40px;
}

.with-ic {
    position: relative;
}

.grid .with-ic svg {
    position: absolute;
    left: 5px;
    top: 2px;
}

.detail-table .with-ic span {
    padding-left: 38px;
}

.with-ic .end {
    padding-left: 52px;
}

/* Order-Liste */
.orders {
    flex: none;
    height: 306px;
    overflow: hidden;
    border-bottom-width: 4px;
}

.orders .titlebar {
    height: 50px;
    overflow: hidden;
}

.order-head {
    display: flex;
    align-items: center;
    gap: 11px;
    margin-left: 11px;
}

.order-head .candle,
.order-head b {
    margin-right: -5px;
}

.filter {
    width: 341px;
}

.filter svg {
    right: 10px;
    top: 12px;
    width: 18px;
    height: 18px;
    color: #a8a8a8;
    stroke-width: 6px;
}

.tabs {
    display: grid;
    gap: 3px;
    padding-right: 9px;
}

.tabs.upper {
    margin-top: 9px;
    grid-template-columns: 247fr 325fr 376fr;
}

.tabs.lower {
    grid-template-columns: 369fr 451fr 129fr;
    border-bottom: 2px solid #77909e;
}

.tabs button {
    height: 32px;
    border: 2px solid #77909e;
    border-bottom: none;
    border-radius: 5px 5px 0 0;
    background: linear-gradient(#fff, #ececec);
}

.tabs .on {
    height: 37px;
    margin-top: -5px;
    border-color: #4a7fd4;
    background: linear-gradient(#5b95f5, #437bdc);
    color: #fff;
}

.order-body {
    display: grid;
    grid-template-columns: minmax(0, 1fr) 32px;
    align-items: start;
}

.order-table {
    margin-top: 0;
}

.order-table td {
    height: 30px;
    padding: 0 2px 0 0;
    text-align: right;
    border-right: 2px solid #a5adb2;
    border-bottom: 2px solid #a5adb2;
    background: #d7e5ed;
}

.order-table tr:nth-child(even) td {
    background: #d0d6dd;
}

.order-table .buy .c { color: #0d7d0d; }
.order-table .sell .c { color: #930000; }
.order-table .b { font-weight: bold; }

.order-table tbody .win-cell {
    background: #90ec90;
}

.vscroll {
    display: flex;
    flex-direction: column;
    gap: 1px;
    height: 145px;
    margin-top: 30px;
    padding: 0 2px;
    background: #8eabba;
}

.vscroll button,
.hscroll button,
.thumb {
    height: 31px;
    border: 2px solid #6e8a99;
    border-radius: 6px;
    background: linear-gradient(#b5d3e0, #93b1c0);
}

.vscroll .thumb {
    height: 24px;
    background: repeating-linear-gradient(#557 0 2px, #b5d3e0 2px 5px) center / 14px 12px no-repeat, #a4c2d0;
}

.vscroll .last {
    margin-top: auto;
}

.tri {
    width: 0;
    border: 7px solid transparent;
}

.tri.up { border-bottom-color: #000; border-top: none; }
.tri.down { border-top-color: #000; border-bottom: none; }
.tri.left { border-right-color: #000; border-left: none; }
.tri.right { border-left-color: #000; border-right: none; }
.tri.white { border-top-color: #fff; }

/* Chartfenster */
.chart-win {
    display: flex;
    flex-direction: column;
    min-height: 0;
    padding: 0 8px 2px 6px;
    background: linear-gradient(#72a7ff, #5590ee 48px);
}

.chart-title {
    display: flex;
    align-items: center;
    height: 49px;
    border-bottom: 2px solid #2f67c4;
    color: #fff;
    font-weight: bold;
}

.chart-title .ctl {
    align-items: center;
    color: #fff;
}

.chart-title .keys svg {
    width: 40px;
    height: 30px;
    margin-top: 4px;
}

.instrument {
    display: flex;
    align-items: center;
    gap: 10px;
    margin: 0 auto;
}

.symbol {
    margin: 0 8px 0 -2px;
}

.price {
    padding: 0 4px;
    line-height: 28px;
    border: 1px solid #8a1010;
    background: linear-gradient(#e04040, #a80808);
}

.info {
    display: flex;
    align-items: center;
    justify-content: space-evenly;
    height: 44px;
    padding: 0 28px 2px 0;
    border-top: 2px solid #d5ecf8;
    border-bottom: 2px solid #77909e;
    background: #9bb8c8;
}

.info-cell {
    display: flex;
    align-items: center;
    gap: 10px;
}

.info .slash {
    margin: 0 1px 0 9px;
}

.gears {
    width: 32px;
    height: 28px;
    margin-left: -6px;
}

.controls {
    display: grid;
    grid-template-columns: minmax(0, 1fr) 837px;
    height: 98px;
    border-top: 2px solid #d5ecf8;
    background: linear-gradient(#9dbaca, #fff);
}

.view {
    display: flex;
    align-items: center;
    justify-content: space-between;
    padding: 0 88px 3px;
}

.range {
    display: flex;
    gap: 3px;
}

.spin {
    position: relative;
    width: 166px;
}

.spin input {
    width: 100%;
    height: 40px;
    padding: 0 35px 0 4px;
    text-align: right;
    border: 2px solid #77909e;
    border-radius: 6px;
    background: #fff;
}

.spin-btns {
    position: absolute;
    right: 5px;
    top: 5px;
    width: 30px;
    display: flex;
    flex-direction: column;
    gap: 2px;
}

.spin-btns button {
    height: 14px;
    background: #a8c6d4;
}

.unit { width: 198px; }
.frame { width: 184px; }
.type { width: 238px; }

.indicator {
    display: flex;
    width: 100px;
    height: 56px;
    border: 2px solid #77909e;
    border-radius: 6px;
    background: linear-gradient(#fff, #ebebeb);
}

.indicator button {
    flex: 1;
    flex-direction: column;
}

.ind { width: 62px; height: 38px; }
.hist { width: 62px; height: 12px; }

.indicator .more {
    flex: none;
    width: 28px;
    border-left: 2px solid #77909e;
}

.ticket {
    display: flex;
    align-items: flex-start;
    padding-left: 5px;
    border-left: 2px solid #77909e;
    border-radius: 16px 0 0 16px;
    background: #fff;
    margin: 0;
}

.ticket .lowered {
    margin-top: 28px;
}

.fold {
    height: 38px;
    width: 14px;
    margin: 28px 4px 0 0;
}

.type {
    margin: 0 9px 0 6px;
}

.field {
    display: flex;
    flex-direction: column;
    align-items: center;
}

.field label,
.field > span {
    line-height: 28px;
}

.field input {
    width: 100px;
}

.field input,
.stop input[type="text"] {
    height: 40px;
    padding: 0 6px;
    text-align: right;
    border: 2px solid #77909e;
    border-radius: 6px;
    background: #fff;
}

.sell-field {
    margin: 0 5px 0 10px;
}

.deal {
    width: 131px;
    height: 57px;
    align-items: baseline;
    border-radius: 6px;
    color: #fff;
    line-height: 54px;
    text-shadow: 0 -1px 1px rgba(0, 0, 0, .5);
}

.deal.red { background: linear-gradient(#f05858, #dc4242); }
.deal.green { background: linear-gradient(#2fc62f, #1cb01c); }
.deal .big { font-size: 42px; }

.deal .sup {
    align-self: flex-start;
    line-height: 36px;
}

.stops {
    display: flex;
    flex-direction: column;
    gap: 8px;
    margin: 3px 0 0 6px;
    padding-left: 9px;
    border-left: 2px solid #8aa2af;
}

.stop {
    display: flex;
    align-items: center;
}

.stop label {
    width: 32px;
    padding-left: 9px;
}

.stop input[type="text"] {
    width: 65px;
    height: 38px;
    color: #8a98a2;
    border-color: #8a98a2;
}

.stop input[type="checkbox"] {
    appearance: none;
    width: 23px;
    height: 23px;
    border: 1px solid #77909e;
    background: #fff;
}

/* Charts */
.charts {
    flex: 1;
    min-height: 0;
    display: flex;
    flex-direction: column;
    gap: 5px;
    background: #fff;
}

.chart {
    display: grid;
    grid-template-columns: minmax(0, 1fr) 105px;
    min-height: 0;
}

.eq1 { flex: 285 1 0; }
.bt1 { flex: 181 1 0; }
.eq2 { flex: 313 1 0; }
.bt2 { flex: 199 1 0; }
.px { flex: 343 1 0; }

.plot {
    position: relative;
    min-height: 0;
    border: 1px solid #77909e;
    border-bottom-width: 2px;
    padding-left: 1px;
    background: linear-gradient(#fff 12%, #dbe5fd 94%) fixed;
}

.plot > svg {
    position: absolute;
    width: calc(100% - 1px);
    height: 100%;
}

.area { fill: #00c3ff; fill-opacity: .34; }
.up-line { fill: none; stroke: #12c3f8; stroke-width: 5; }
.down-line { fill: none; stroke: #f78df6; stroke-width: 5; }
.long { fill: #00c6ff; shape-rendering: crispEdges; }
.short-pos { fill: #ff8cff; shape-rendering: crispEdges; }
.zero { fill: #2a2f9e; }
.start { fill: #000; }
.rise { fill: none; stroke: #46cc46; stroke-width: 2; shape-rendering: crispEdges; }
.fall { fill: none; stroke: #d06868; stroke-width: 2; shape-rendering: crispEdges; }

.tag {
    position: relative;
    display: inline-flex;
    align-items: center;
    gap: 8px;
    height: 34px;
    padding: 0 6px 0 5px;
    background: linear-gradient(#c2e3f2, #9dbaca);
    border-right: 2px solid #77909e;
    border-bottom: 2px solid #77909e;
}

.tag svg {
    width: 26px;
    height: 26px;
}

.tag-row {
    position: relative;
    display: flex;
    align-items: center;
    gap: 7px;
}

.credit {
    position: absolute;
    left: 4px;
    bottom: 0;
}

.credit i {
    margin-left: 4px;
}

.axis {
    position: relative;
}

.tick {
    position: absolute;
    left: 0;
    height: 26px;
    margin-top: -13px;
    padding-left: 12px;
}

.tick::before {
    content: "";
    position: absolute;
    left: 0;
    top: 12px;
    width: 6px;
    height: 2px;
    background: #77909e;
}

.tick.minor::before {
    width: 3px;
}

.tick.strong {
    font-size: 24px;
    font-weight: bold;
}

.badge {
    position: absolute;
    left: 7px;
    height: 28px;
    margin-top: -14px;
    padding: 0 4px;
    line-height: 24px;
    border: 2px solid #8294a0;
    background: linear-gradient(#fff, #c9d6f0);
    color: #14bdf5;
}

.badge.last,
.badge.ask {
    padding: 0 2px;
    color: #000;
}

.badge.last {
    background: linear-gradient(#ffe000, #efb400);
}

.years {
    position: relative;
    height: 39px;
    background: #fff;
}

.year {
    position: absolute;
    top: 0;
    width: 80px;
    margin-left: -40px;
    padding-top: 11px;
    text-align: center;
}

.year::before {
    content: "";
    position: absolute;
    left: 39px;
    top: 0;
    width: 2px;
    height: 7px;
    background: #77909e;
}

/* Fußleiste */
.footer {
    display: flex;
    align-items: center;
    gap: 21px;
    height: 62px;
    padding: 4px 14px 0 10px;
    border-top: 2px solid #77909e;
    box-shadow: inset 0 2px 0 #cdeaf7;
    background: linear-gradient(#aecddb, #8dabb9);
}

.hscroll {
    flex: 1;
    display: flex;
    justify-content: space-between;
    border-top: 1px solid #6e8a99;
    border-bottom: 2px solid #6e8a99;
    border-radius: 6px;
    background: #94b2c1;
    margin: 0 -9px 0 -4px;
}

.hscroll button {
    width: 31px;
    height: 29px;
}
```
FILE: script.js
```js
// Kurvenpunkte "x,y", Suffix p = Abschnitt im Rückgang
const EQUITY_V1 = `3,267 17,265 20,267p 23,271 28,265 45,265p 57,262 60,265p 66,263 90,261p 92,260 114,260 118,260 123,256 135,254 145,252 149,250
172,249p 183,252p 189,247 199,247 226,248p 231,256 237,246 251,244p 260,239 269,239 277,244p 284,240 305,240 309,241 311,238 323,233 341,231
351,230 354,226 375,225 387,218 396,216 417,216 420,218 423,214 448,214p 454,217p 477,217p 481,214 511,213 514,211 526,212 538,215p 548,213
551,209 560,210 561,214p 569,206 584,204 603,204 608,209p 626,210p 629,212 635,208 648,208 655,205p 661,209 666,200 670,199p 678,204 684,201
693,201 711,201p 717,199 724,198 728,195 748,196 752,201p 767,202 775,198p 790,195 808,195 814,198p 826,194 841,194 844,195 851,189 858,190
864,196 870,190 887,190 893,186 917,185 926,180 935,177 939,177 942,171 958,170 962,163 976,161 1002,161 1005,166 1008,157 1022,155 1033,151
1048,153p 1057,145 1080,146 1088,144p 1092,144 1109,150p 1114,144 1125,143 1131,149p 1138,150 1143,142 1153,139 1158,146p 1164,134 1181,130
1187,127 1194,130 1199,126p 1202,134 1205,122 1215,123p 1221,129p 1225,120 1234,120 1237,124p 1241,119 1248,117 1264,117 1267,110 1285,110
1290,113p 1295,110 1297,119p 1305,117p 1308,121 1311,110 1328,110 1332,112 1335,105 1342,107 1346,99 1352,96 1365,96 1368,103p 1372,94 1383,94
1388,89 1408,89 1411,87 1418,90 1426,81 1434,87p 1438,83 1441,91 1444,78 1456,75 1460,78 1464,70 1471,65 1475,71p 1492,71p 1494,69 1523,69
1525,64 1542,63 1547,58 1567,56 1577,49 1591,50 1597,45 1613,43 1623,35 1646,35 1655,33 1659,36p 1663,28p 1666,34 1671,30 1680,29 1685,23
1694,26p 1703,22 1715,26 1720,21 1727,15 1731,18p 1755,18p 1760,13 1776,13`;

const EQUITY_V2 = `3,292 19,292 23,297 26,291 37,291p 54,289 57,287 61,294p 66,288 87,288 92,286 108,286 112,288 120,286 125,281 135,280 146,281p
149,276 172,275 175,278p 179,276 199,275 202,274 219,274 222,279p 225,275 231,283 235,275 249,275p 254,270 269,270 277,276p 282,272 287,276p
292,274 310,274 313,270 318,273p 325,268 349,268 352,270 355,266 366,262 376,263 384,254 395,252 402,252 405,256p 419,257p 421,259 424,252
451,252 472,250p 478,250 482,244 502,244 505,246 512,243 529,244p 535,242 540,249 548,238 566,238 569,234 577,233 580,230 599,230 621,230p
626,226 632,226p 638,222 646,225 654,219 660,225p 664,220 681,217 686,218 710,218 717,215p 731,217p 735,214 744,215 763,215p 768,219 772,209
793,210p 801,213p 809,212p 815,216 823,212p 829,208 851,205 857,208p 863,204 884,204 887,201 904,199 923,197p 934,202p 939,200 942,194 951,194
959,197 962,188 974,186 993,186 996,181 1002,182p 1005,187 1008,178 1023,179p 1030,175 1046,176p 1049,177 1056,168 1068,168p 1077,167 1080,170p
1088,170p 1092,165 1095,168 1109,166 1117,158 1123,156 1143,156 1155,156p 1158,163p 1161,152 1168,155p 1172,152 1190,146 1198,147p 1201,155p
1204,145 1212,138 1221,138 1223,141 1226,131 1233,132 1235,134p 1239,132p 1256,133p 1264,128 1267,122 1283,122 1289,128p 1294,121 1303,121p
1306,123 1311,110 1317,109 1319,106 1329,107 1334,100 1349,100 1352,96 1360,96 1363,100p 1366,94 1383,94 1387,90 1404,90 1409,85 1417,85
1418,90p 1425,83p 1431,90p 1436,83 1440,89 1444,76 1450,74 1455,81p 1460,84 1464,74 1469,72 1493,72 1496,68 1513,68 1516,70p 1522,69 1525,60
1544,60 1547,54 1567,54 1572,56 1579,48 1591,51p 1595,44 1611,44 1619,38 1628,42 1633,38 1654,38p 1659,42p 1663,37 1668,35 1678,34 1683,27
1708,28p 1714,24 1721,25p 1727,18 1735,19 1752,18p 1755,16 1776,16p`;

// Positionen "von-bis:Kontrakte"
const POS_V1 = `13-16:1 15-18:3 18-20:4 20-27:5 27-29:4 33-41:1 35-38:2 55-71:8 121-125:8 141-159:5 163-201:5 227-241:8 247-255:8 267-270:3 270-283:6
289-297:1 311-323:8 349-353:8 371-383:8 391-395:5 413-429:8 477-481:8 500-503:1 503-506:3 506-508:2 508-512:4 512-515:1 521-523:1 523-526:3 526-529:6
529-531:9 531-539:10 545-549:10 565-567:5 567-571:10 631-639:5 655-669:10 677-691:10 719-733:10 739-752:10 759-762:1 762-765:3 765-767:5 767-771:8
771-774:4 774-777:2 781-791:1 784-790:2 805-811:2 811-813:4 813-817:6 817-820:3 825-832:5 849-871:10 891-901:5 915-927:10 937-943:10 943-945:5
959-963:10 1001-1013:10 1021-1023:1 1023-1025:3 1025-1031:5 1031-1037:1 1043-1059:10 1065-1067:1 1067-1069:3 1069-1075:5 1075-1077:6 1077-1079:8
1079-1081:9 1081-1083:6 1083-1087:1 1087-1105:6 1109-1117:10 1153-1155:5 1155-1165:10 1177-1183:5 1197-1199:5 1199-1211:10 1211-1217:5 1221-1225:10
1261-1267:10 1283-1286:1 1286-1288:3 1288-1291:5 1291-1294:7 1294-1297:8 1297-1299:10 1299-1301:4 1305-1311:10 1325-1328:1 1328-1331:3 1331-1335:6
1335-1337:1 1349-1353:5 1415-1425:10 1437-1445:10 1445-1449:5 1459-1465:10 1465-1467:5 1467-1471:10 1471-1475:5 1521-1525:10 1543-1547:10 1565-1567:1
1567-1570:3 1570-1573:5 1573-1577:7 1587-1590:1 1590-1593:4 1593-1595:6 1595-1597:1 1609-1621:10 1655-1671:10 1677-1683:10 1683-1691:5 1697-1709:5
1709-1717:10 1719-1735:10 7-9:-10 47-51:-10 113-115:-10 135-137:-10 259-261:-10 303-311:-10 363-365:-10 449-453:-10 559-567:-10 581-583:-10
603-609:-10 623-633:-10 647-655:-10 669-679:-10 711-715:-10 841-847:-10 885-891:-10 907-917:-10 929-931:-10 973-975:-10 1123-1147:-10 1145-1147:-20
1169-1171:-10 1189-1197:-10 1235-1243:-10 1341-1345:-10 1365-1373:-10 1429-1439:-10 1451-1453:-10 1557-1561:-10 1603-1605:-10 1647-1649:-10
1755-1761:-10`;

const POS_V2 = `13-15:1 15-17:2 17-19:3 19-21:5 21-23:6 23-27:7 33-41:1 35-39:2 55-63:8 121-125:8 141-155:4 145-151:8 163-169:4 169-177:8 227-237:8
247-255:8 267-269:2 269-271:4 271-273:6 273-279:8 279-283:5 283-289:4 289-297:1 311-319:8 349-353:8 371-381:8 381-383:4 391-395:4 413-423:8 425-429:4
477-481:8 499-501:1 501-503:2 503-505:3 505-507:2 507-509:3 509-511:4 511-513:3 521-523:1 523-525:2 525-527:4 527-529:6 529-531:7 531-533:9
533-535:10 535-537:5 537-545:6 545-549:8 565-567:4 567-571:8 631-639:4 643-645:4 645-653:8 655-663:8 667-673:4 677-685:8 719-727:8 739-747:8
759-761:1 761-763:2 763-765:4 765-767:6 767-771:8 771-773:4 781-791:1 784-791:2 793-795:1 795-797:3 797-805:4 805-811:2 811-813:5 813-817:6
817-819:5 825-833:4 849-857:8 891-901:4 915-923:8 927-935:4 937-943:8 943-945:4 949-959:4 959-963:8 1001-1009:8 1021-1023:1 1023-1025:3 1025-1031:5
1031-1035:1 1043-1047:8 1047-1055:10 1055-1057:9 1065-1067:1 1067-1069:3 1069-1075:5 1075-1077:6 1077-1079:7 1087-1097:8 1109-1117:8 1153-1155:4
1155-1163:8 1165-1169:4 1177-1183:4 1197-1199:4 1199-1207:8 1221-1225:8 1261-1267:8 1283-1285:1 1285-1287:2 1287-1289:3 1289-1291:5 1291-1293:7
1293-1295:8 1295-1297:7 1305-1307:9 1307-1311:10 1325-1327:1 1327-1329:2 1329-1331:3 1331-1335:6 1335-1337:1 1349-1353:4 1361-1367:4 1415-1423:8
1427-1445:8 1445-1457:4 1459-1465:8 1465-1467:4 1467-1471:8 1521-1525:8 1543-1547:8 1565-1567:1 1567-1569:3 1569-1571:5 1571-1573:6 1573-1577:7
1577-1587:1 1579-1587:2 1587-1589:1 1589-1591:3 1591-1593:5 1593-1595:6 1595-1597:1 1609-1619:8 1623-1631:4 1655-1663:8 1677-1683:8 1683-1689:4
1697-1705:4 1719-1729:8 1731-1741:4 65-67:-10 87-91:-10 109-113:-10 131-135:-10 197-201:-10 219-223:-10 323-325:-10 383-385:-10 403-405:-10
425-427:-10 447-449:-10 469-473:-10 599-603:-10 623-625:-10 643-645:-10 667-669:-10 709-711:-10 731-733:-10 793-795:-10 837-839:-10 859-861:-10
883-885:-10 903-907:-10 927-929:-10 949-951:-10 971-973:-10 993-995:-10 1099-1101:-10 1121-1123:-10 1143-1145:-10 1165-1167:-10 1189-1191:-10
1233-1237:-10 1253-1257:-10 1317-1319:-10 1361-1363:-10 1427-1429:-10 1449-1451:-10 1493-1495:-10 1513-1515:-10 1577-1579:-10 1621-1625:-10
1643-1645:-10 1665-1669:-10 1709-1713:-10 1731-1733:-10 1753-1755:-10`;

const PRICE = `2,249 12,262 16,252 22,265 40,249 49,264 57,252 62,257 75,249 90,264 102,251 115,253 126,241 149,234 157,236 163,226 183,228 202,222
213,213 226,222 230,237 240,222 249,224 261,212 287,226 299,221 308,212 313,222 322,217 325,222 331,266 335,256 340,276 351,287 354,271 358,287
361,271 366,282 372,259 378,262 383,247 387,261 395,256 403,276 408,256 418,267 435,252 454,234 466,231 475,237 482,222 493,227 502,239 514,234
529,249 540,259 548,246 557,254 563,241 576,246 587,227 605,227 614,216 641,219 651,216 658,226 669,214 684,207 693,204 711,202 716,207 731,207
741,196 760,204 768,214 778,189 791,181 808,192 815,204 827,189 860,184 864,192 876,176 891,179 902,164 917,162 929,152 933,161 939,164 950,146
958,151 965,142 977,164 985,145 996,149 1003,166 1018,146 1026,157 1031,147 1046,144 1056,136 1068,136 1080,134 1089,142 1098,142 1109,164
1132,141 1141,144 1150,162 1158,179 1169,159 1181,156 1187,137 1195,134 1202,152 1209,136 1216,149 1223,139 1227,122 1231,109 1241,112 1254,96
1261,86 1266,69 1274,76 1285,62 1291,77 1295,72 1299,92 1306,86 1314,74 1322,92 1331,102 1337,86 1346,109 1354,81 1362,97 1368,82 1377,106
1380,145 1384,124 1396,124 1406,152 1412,132 1421,127 1425,107 1435,104 1440,114 1450,92 1461,122 1471,109 1477,139 1486,151 1491,139 1502,172
1509,147 1515,152 1524,134 1533,132 1542,149 1552,121 1564,136 1573,136 1579,124 1585,129 1591,149 1597,132 1599,159 1603,146 1606,152 1613,132
1628,126 1632,112 1652,112 1659,124 1668,119 1686,112 1695,127 1700,112 1715,117 1720,96 1727,87 1750,86 1760,86 1769,76 1775,80`;

function parsePoints(text) {
    return text.trim().split(/\s+/).map(p => {
        const [x, y] = p.split(',');
        return { x: +x, y: parseFloat(y), down: p.endsWith('p') };
    });
}

function drawEquity(id, text, zero, height) {
    const pts = parsePoints(text);
    const line = pts.map(p => `${p.x},${p.y}`).join(' L');
    let up = '';
    let down = '';
    for (let i = 1; i < pts.length; i++) {
        // erst steigen, dann seitwärts: die Kurve läuft in Stufen
        const a = pts[i - 1];
        const b = pts[i];
        const step = Math.min(a.x + 3, b.x);
        const seg = `M${a.x},${a.y} L${step},${b.y} L${b.x},${b.y}`;
        if (b.down) down += seg;
        else up += seg;
    }
    document.getElementById(id).innerHTML =
        `<path class="area" d="M3,${zero} L${line} L1777,${zero}Z"/>` +
        `<rect class="start" x="1" y="0" width="3" height="${height}"/>` +
        `<path class="down-line" d="${down}"/><path class="up-line" d="${up}"/>` +
        `<rect class="zero" x="0" y="${zero - 1}" width="1777" height="2"/>`;
}

function drawPositions(id, text, zero, unit) {
    let out = '';
    text.trim().split(/\s+/).forEach(item => {
        const [, a, b, v] = item.match(/(\d+)-(\d+):(-?\d+)/);
        const h = Math.abs(v) * unit;
        const y = v > 0 ? zero - h : zero;
        out += `<rect class="${v > 0 ? 'long' : 'short-pos'}" x="${a}" y="${y}" width="${b - a}" height="${h}"/>`;
    });
    out += `<rect class="zero" x="0" y="${zero - 1}" width="1777" height="2"/>`;
    document.getElementById(id).innerHTML = out;
}

function drawCandles(id, text) {
    const pts = parsePoints(text);
    let rise = '';
    let fall = '';
    let seed = 7;
    let last = pts[0].y;
    let k = 0;
    for (let x = 3; x < 1775; x += 2) {
        while (pts[k + 1].x < x) k++;
        const t = (x - pts[k].x) / (pts[k + 1].x - pts[k].x);
        seed = (seed * 1103515245 + 12345) % 2147483648;
        const noise = seed / 2147483648;
        const y = pts[k].y + t * (pts[k + 1].y - pts[k].y) + (noise - .5) * 7;
        const size = 4 + noise * 6;
        const seg = `M${x},${(Math.min(y, last) - size / 2).toFixed(1)}V${(Math.max(y, last) + size / 2).toFixed(1)}`;
        if (y < last) rise += seg;
        else fall += seg;
        last = y;
    }
    document.getElementById(id).innerHTML = `<path class="rise" d="${rise}"/><path class="fall" d="${fall}"/>`;
}

// Achse: Beschriftung steht am Wert, top in Prozent der Plothöhe
function drawAxis(id, height, ticks) {
    document.getElementById(id).innerHTML = ticks.map(([label, y, cls = '']) =>
        `<span class="${cls.startsWith('badge') ? cls : 'tick ' + cls}" style="top:${(y / height * 100).toFixed(2)}%">${label}</span>`
    ).join('');
}

drawEquity('eq1', EQUITY_V1, 267, 282);
drawPositions('bt1', POS_V1, 63, 5.4);
drawEquity('eq2', EQUITY_V2, 291, 310);
drawPositions('bt2', POS_V2, 99, 9);
drawCandles('px', PRICE);

drawAxis('ax1', 285, [['', 24], ['', 46, 'minor'], ['100.000', 68, 'strong'], ['', 90, 'minor'], ['80.000', 111], ['', 134, 'minor'], ['60.000', 155],
    ['', 178, 'minor'], ['40.000', 199], ['', 223, 'minor'], ['20.000', 245], ['', 268, 'minor'], ['123.870', 16, 'badge']]);
drawAxis('ax2', 181, [['10', 9], ['-10', 116], ['-20', 169], ['0', 64, 'badge']]);
drawAxis('ax3', 313, [['100.000', 26, 'strong'], ['', 56, 'minor'], ['80.000', 85], ['', 115, 'minor'], ['60.000', 143], ['', 174, 'minor'],
    ['40.000', 201], ['', 232, 'minor'], ['20.000', 261], ['', 292, 'minor'], ['103.462', 16, 'badge']]);
drawAxis('ax4', 199, [['10', 10], ['5', 55], ['-5', 143], ['-10', 187], ['0', 100, 'badge']]);
drawAxis('ax5', 343, [['14.000', 10], ['', 42, 'minor'], ['', 72], ['', 104, 'minor'], ['10.000', 133, 'strong'], ['', 166, 'minor'], ['8.000', 197],
    ['', 228, 'minor'], ['6.000', 259], ['', 290, 'minor'], ['4.000', 321], ['11.818,5', 92, 'badge ask'], ['11.824,0', 64, 'badge last']]);

document.getElementById('years').innerHTML = [[2011, 182], [2012, 430], [2013, 692], [2014, 952], [2015, 1214], [2016, 1476], [2017, 1736]]
    .map(([y, x]) => `<span class="year" style="left:${(x / 1884 * 100).toFixed(2)}%">${y}</span>`).join('');
```
